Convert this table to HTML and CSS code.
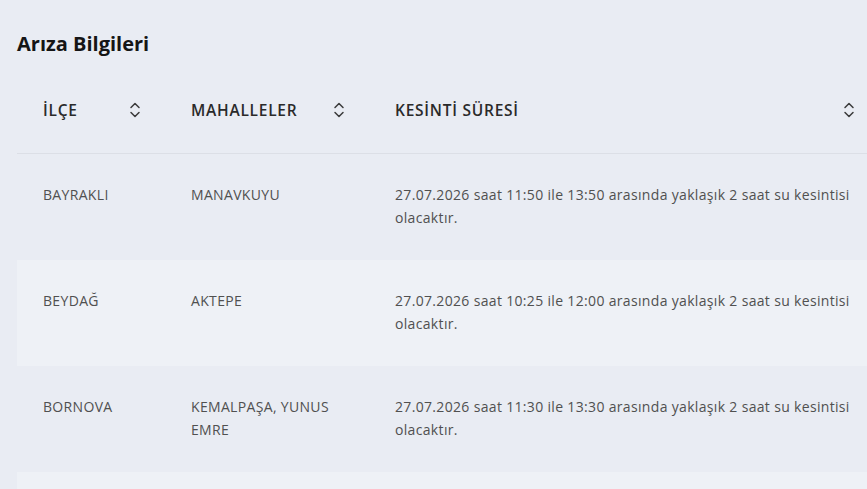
FILE: index.html
```html
<!DOCTYPE html>
<html lang="tr">
<head>
<meta charset="utf-8">
<title>Arıza Bilgileri</title>
<link rel="stylesheet" href="styles.css">
</head>
<body>
<main class="page">
  <h2 class="title">Arıza Bilgileri</h2>
  <table class="grid">
    <colgroup>
      <col class="c1"><col class="c2"><col class="c3">
    </colgroup>
    <thead>
      <tr>
        <th><span class="th-in"><span>İLÇE</span><svg class="sort" viewBox="0 0 12 18" width="12" height="18"><path d="M2 6.5 6 2.5 10 6.5M2 11.5 6 15.5 10 11.5"/></svg></span></th>
        <th><span class="th-in"><span>MAHALLELER</span><svg class="sort" viewBox="0 0 12 18" width="12" height="18"><path d="M2 6.5 6 2.5 10 6.5M2 11.5 6 15.5 10 11.5"/></svg></span></th>
        <th><span class="th-in"><span>KESİNTİ SÜRESİ</span><svg class="sort" viewBox="0 0 12 18" width="12" height="18"><path d="M2 6.5 6 2.5 10 6.5M2 11.5 6 15.5 10 11.5"/></svg></span></th>
      </tr>
    </thead>
    <tbody>
      <tr>
        <td>BAYRAKLI</td>
        <td>MANAVKUYU</td>
        <td><span class="desc">27.07.2026 saat 11:50 ile 13:50 arasında yaklaşık 2 saat su kesintisi olacaktır.</span></td>
      </tr>
      <tr>
        <td>BEYDAĞ</td>
        <td>AKTEPE</td>
        <td><span class="desc">27.07.2026 saat 10:25 ile 12:00 arasında yaklaşık 2 saat su kesintisi olacaktır.</span></td>
      </tr>
      <tr>
        <td>BORNOVA</td>
        <td><span class="mah">KEMALPAŞA, YUNUS EMRE</span></td>
        <td><span class="desc">27.07.2026 saat 11:30 ile 13:30 arasında yaklaşık 2 saat su kesintisi olacaktır.</span></td>
      </tr>
      <tr class="next">
        <td></td>
        <td></td>
        <td></td>
      </tr>
    </tbody>
  </table>
</main>
</body>
</html>
```

FILE: styles.css
```css
html, body {
  margin: 0;
  padding: 0;
  background: #e9ecf3;
  overflow: hidden;
}
body {
  font-family: "Open Sans", "Noto Sans", sans-serif;
  color: #4a4a4a;
}
.page {
  padding: 29px 0 0 17px;
}
.title {
  margin: 0;
  font-size: 20px;
  font-weight: 700;
  line-height: 30px;
  color: #151515;
}
.grid {
  margin-top: 8px;
  width: 862px;
  border-collapse: collapse;
  table-layout: fixed;
}
.c1 { width: 148px; }
.c2 { width: 204px; }
.grid th {
  text-align: left;
  padding: 30px 24px 30px 26px;
  font-size: 15.5px;
  font-weight: 600;
  letter-spacing: 0.75px;
  color: #2a2a2a;
  border-bottom: 1px solid #dcdfe6;
  height: 26px;
}
.th-in {
  display: flex;
  align-items: center;
  justify-content: space-between;
}
.sort {
  fill: none;
  stroke: #3a3a3a;
  stroke-width: 1.5;
  stroke-linecap: round;
  stroke-linejoin: round;
  flex: none;
}
.grid td {
  vertical-align: top;
  padding: 30px 10px 31px 26px;
  font-size: 14px;
  letter-spacing: 0.33px;
  line-height: 22.5px;
  height: 45px;
  color: #505050;
}
.grid tbody tr:nth-child(even) td {
  background: #eef1f6;
}
.desc {
  display: block;
  max-width: 462px;
}
.mah {
  display: block;
  max-width: 150px;
}
```
